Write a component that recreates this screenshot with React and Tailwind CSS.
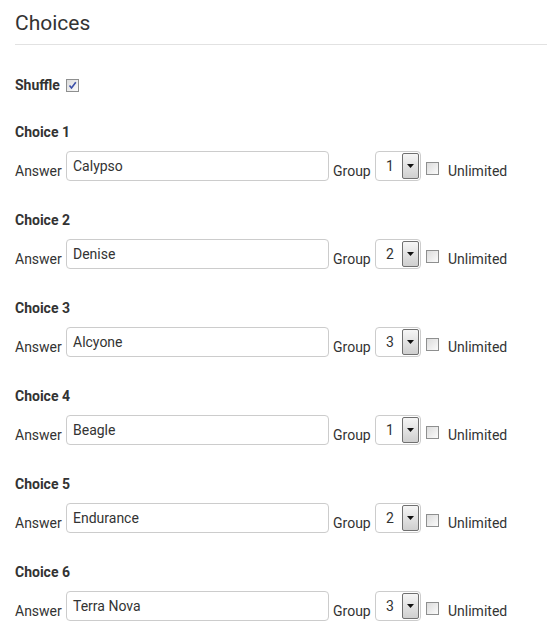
import React from 'react'

const choices = [
  { n: 1, answer: 'Calypso', group: 1 },
  { n: 2, answer: 'Denise', group: 2 },
  { n: 3, answer: 'Alcyone', group: 3 },
  { n: 4, answer: 'Beagle', group: 1 },
  { n: 5, answer: 'Endurance', group: 2 },
  { n: 6, answer: 'Terra Nova', group: 3 }
]

const Checkbox = ({ checked }) => (
  <span className="inline-flex w-[13px] h-[13px] border border-[#8e8f8f] bg-gradient-to-br from-[#dcdcdc] to-[#fbfbfb] items-center justify-center">
    {checked && (
      <svg width="9" height="9" viewBox="0 0 9 9">
        <path d="M1.5 4.5 L3.5 7 L7.8 1.2" fill="none" stroke="#3b4fa8" strokeWidth="1.6" />
      </svg>
    )}
  </span>
)

const GroupSelect = ({ value }) => (
  <div className="flex items-center w-[46px] h-[30px] border border-[#cccccc] rounded-[4px] bg-white pl-[10px] pr-[1px]">
    <span className="flex-1 text-[14px] text-[#333]">{value}</span>
    <div className="flex items-center justify-center w-[17px] h-[26px] border border-[#707070] rounded-[2px] bg-gradient-to-b from-[#f6f6f6] to-[#cfcfcf]">
      <svg width="7" height="4" viewBox="0 0 7 4">
        <path d="M0 0 H7 L3.5 4 Z" fill="#111" />
      </svg>
    </div>
  </div>
)

export default function App() {
  return (
    <div className="pl-[15px] bg-white min-h-[633px] text-[#333] text-[14px]" style={{ fontFamily: 'Roboto, "Noto Sans", sans-serif' }}>
      <h2 className="text-[21px] font-normal leading-[28px] pt-[9px] pb-[7px] border-b border-[#e2e2e2] text-[#333]">Choices</h2>

      <div className="flex items-center gap-[6px] mt-[32px] h-[16px]">
        <span className="font-bold">Shuffle</span>
        <Checkbox checked />
      </div>

      {choices.map((c) => (
        <div key={c.n} className="mt-[30px]">
          <div className="font-bold leading-[18px]">Choice {c.n}</div>
          <div className="flex items-end mt-[10px] h-[30px]">
            <span className="mb-[-1px] w-[51px]">Answer</span>
            <div className="w-[263px] h-[30px] border border-[#cccccc] rounded-[4px] flex items-center px-[6px] text-[14px] text-[#333]">
              {c.answer}
            </div>
            <span className="mb-[-1px] ml-[4px] w-[42px]">Group</span>
            <GroupSelect value={c.group} />
            <span className="ml-[5px] mb-[6px] flex">
              <Checkbox />
            </span>
            <span className="ml-[9px] mb-[-1px] text-[14px]">Unlimited</span>
          </div>
        </div>
      ))}
    </div>
  )
}
